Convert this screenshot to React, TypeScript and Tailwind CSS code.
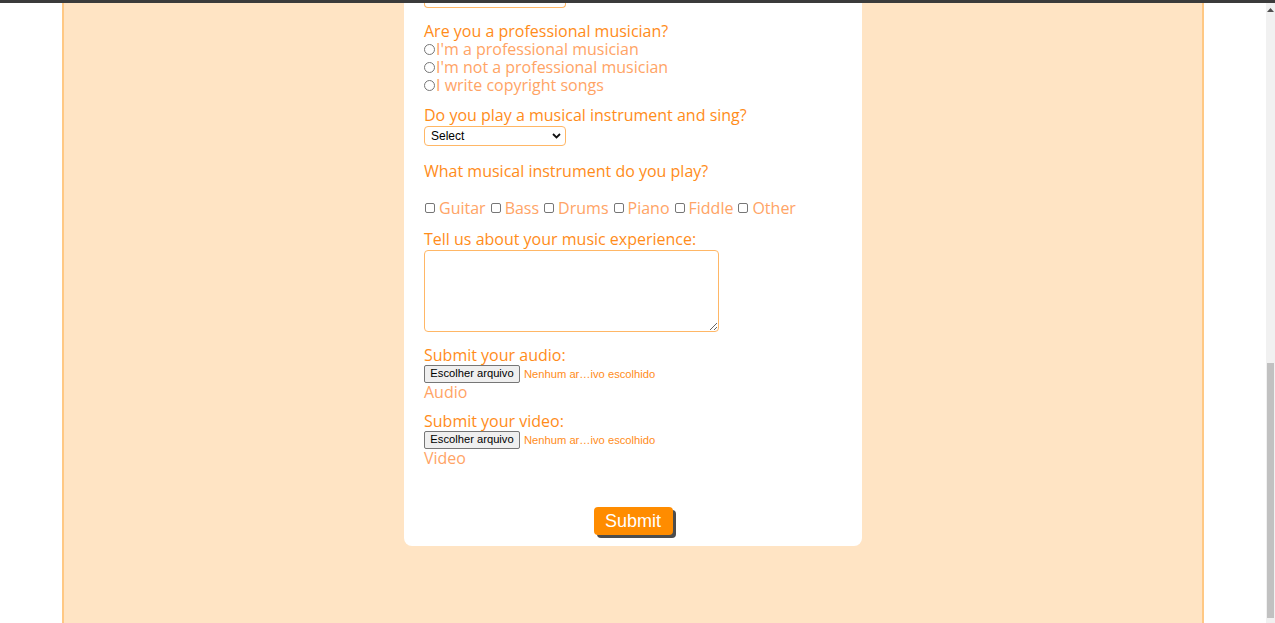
import React from "react";

const heading = "text-[16px] leading-[18px] text-[#ff8c1a] font-['Open_Sans',sans-serif]";
const option = "text-[16px] leading-[18px] text-[#ffa466] font-['Open_Sans',sans-serif]";

const radios = ["I'm a professional musician", "I'm not a professional musician", "I write copyright songs"];
const instruments = ["Guitar", "Bass", "Drums", "Piano", "Fiddle", "Other"];

function Radio({ label }: { label: string }) {
    return (
        <label className={`flex items-center ${option}`}>
            <span className="mr-px h-[11px] w-[11px] shrink-0 rounded-full border-[1.5px] border-[#767676] bg-white" />
            {label}
        </label>
    );
}

function FileRow() {
    return (
        <div className="mt-px flex h-[18px] items-center font-['Liberation_Sans',Arial,sans-serif] text-[11.2px]">
            <button className="h-[18px] w-[96px] whitespace-nowrap rounded-[2px] border border-[#767676] bg-[#efefef] leading-none text-black">
                Escolher arquivo
            </button>
            <span className="ml-[4px] whitespace-nowrap text-[#ff8c1a]">Nenhum ar…ivo escolhido</span>
        </div>
    );
}

function Scrollbar() {
    return (
        <div className="flex w-[9px] shrink-0 flex-col bg-[#f1f1f1]">
            <div className="flex h-[12px] items-start justify-center pt-[5px]">
                <svg width="7" height="4" viewBox="0 0 7 4">
                    <path d="M0 4 L3.5 0 L7 4 Z" fill="#505050" />
                </svg>
            </div>
            <div className="flex-1" />
            <div className="mx-px h-[255px] bg-[#c1c1c1]" />
            <div className="h-[5px]" />
        </div>
    );
}

export default function App() {
    return (
        <div className="flex h-[623px] w-[1275px] flex-col overflow-hidden bg-white">
            <div className="h-[3px] bg-[#3b3b3b]" />
            <div className="flex flex-1">
                <div className="flex flex-1 justify-center bg-white">
                    <div className="flex w-[1142px] justify-center border-x-2 border-[#ffc884] bg-[#ffe4c4]">
                        <div className="h-fit w-[458px] rounded-b-lg bg-white px-5 pb-[11px]">
                            <div className="h-[5px] w-[142px] rounded-b-[4px] border-x border-b border-[#ffb766]" />

                            <div className={`mt-[14px] ${heading}`}>Are you a professional musician?</div>
                            {radios.map((r) => (
                                <Radio key={r} label={r} />
                            ))}

                            <div className={`mt-[12px] ${heading}`}>Do you play a musical instrument and sing?</div>
                            <div className="mt-[2px] flex h-[20px] w-[142px] items-center justify-between rounded-[4px] border border-[#ffb766] bg-white pl-[6px] pr-[4px] font-['Liberation_Sans',Arial,sans-serif] text-[12px] text-black">
                                <span>Select</span>
                                <svg width="9" height="6" viewBox="0 0 9 6">
                                    <path d="M1 1 L4.5 4.5 L8 1" stroke="#111" strokeWidth="1.8" fill="none" />
                                </svg>
                            </div>

                            <div className={`mt-[16px] ${heading}`}>What musical instrument do you play?</div>
                            <div className="mt-[19px] flex items-center">
                                {instruments.map((i) => (
                                    <label key={i} className={`mr-[4px] flex items-center ${option}`}>
                                        <span className="mr-[4px] ml-px h-[10px] w-[10px] rounded-[2px] border-[1.5px] border-[#767676] bg-white" />
                                        {i}
                                    </label>
                                ))}
                            </div>

                            <div className={`mt-[13px] ${heading}`}>Tell us about your music experience:</div>
                            <textarea className="mt-[2px] block h-[82px] w-[295px] rounded-[4px] border border-[#ffb766] bg-white" />

                            <div className={`mt-[14px] ${heading}`}>Submit your audio:</div>
                            <FileRow />
                            <div className={option}>Audio</div>

                            <div className={`mt-[11px] ${heading}`}>Submit your video:</div>
                            <FileRow />
                            <div className={option}>Video</div>

                            <div className="mt-[40px] flex justify-center">
                                <button className="h-[28px] w-[79px] rounded-[4px] bg-[#ff8c00] font-['Liberation_Sans',Arial,sans-serif] text-[18px] leading-none text-white shadow-[3px_3px_0px_#4d4d4d]">
                                    Submit
                                </button>
                            </div>
                        </div>
                    </div>
                </div>
                <Scrollbar />
            </div>
        </div>
    );
}
